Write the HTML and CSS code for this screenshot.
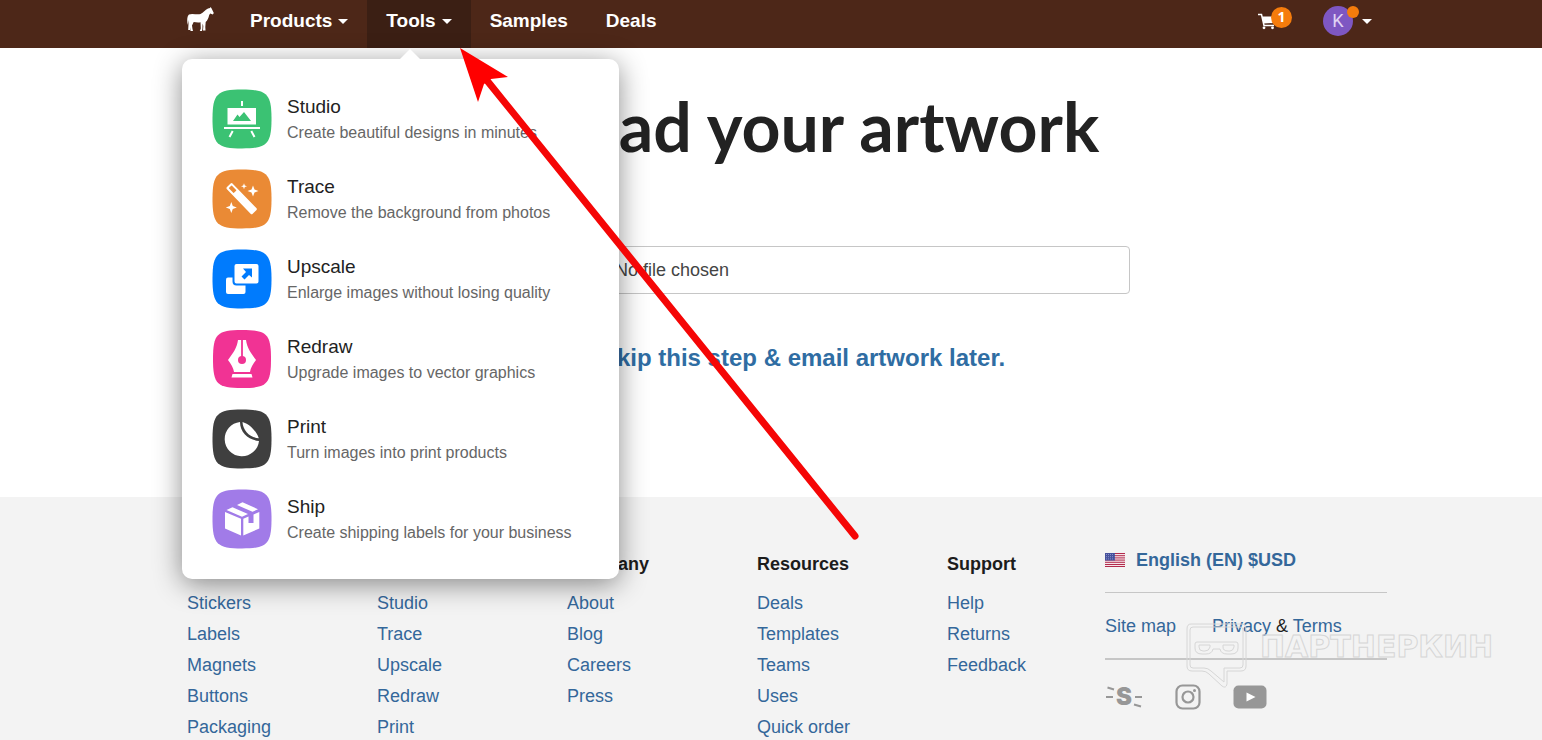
FILE: index.html
```
<!DOCTYPE html>
<html lang="en">
<head>
    <meta charset="UTF-8">
    <meta name="viewport" content="width=device-width, initial-scale=1.0">
    <title>Upload your artwork</title>
    <link rel="stylesheet" href="styles.css">
</head>
<body>
    <header class="topbar">
        <nav class="container nav">
            <a href="#" class="logo" aria-label="Home">
                <svg width="28" height="26" viewBox="0 0 28 26" fill="#fff">
                    <path d="M.8 18C-.2 14 0 9 2 7.500 5 6 9.500 7.800 13.500 7 16.500 6 18 3 21 1.600L23 1 23.600 0 24.600 1.500 26.800 6 25.800 7.400 23.200 6.600 22.200 8C21.500 11 20.500 13.500 18.700 15L18.300 20 18.500 23.500H16L16.300 19 15.600 16.500 15.400 22 15 24H12.800L13.800 21.500 13.500 15.300C11 15.800 8.500 15.300 6.700 15L5 18.500 5.500 22 6 24H3.500L3 20 3 23H1.200L1.500 17 1.300 13Z"/>
                </svg>
            </a>
            <ul class="nav-list">
                <li><button type="button" class="nav-item">Products<span class="caret"></span></button></li>
                <li><button type="button" class="nav-item active" aria-expanded="true">Tools<span class="caret"></span></button></li>
                <li><a href="#" class="nav-item">Samples</a></li>
                <li><a href="#" class="nav-item">Deals</a></li>
            </ul>
            <div class="account">
                <a href="#" class="cart" aria-label="Cart">
                    <svg width="18" height="17" viewBox="0 0 18 17" fill="none" stroke="#fff">
                        <path d="M0 1.500H3.500L6 12.500H16" stroke-width="1.500"/>
                        <path d="M4 3.500H17L15.500 10 5.500 10.500Z" fill="#fff" stroke="none"/>
                        <circle cx="6" cy="14.800" r="1.400" fill="#fff" stroke="none"/>
                        <circle cx="14.500" cy="14.800" r="1.400" fill="#fff" stroke="none"/>
                    </svg>
                    <span class="badge">1</span>
                </a>
                <button type="button" class="user">
                    <span class="avatar">K<span class="dot"></span></span>
                    <span class="caret"></span>
                </button>
            </div>

            <div class="menu">
                <a href="#" class="menu-item">
                    <svg class="menu-icon" viewBox="0 0 60 60">
                        <path fill="#3bc273" d="M30 .5C55 .5 59.500 5 59.500 30S55 59.500 30 59.500.5 55 .5 30 5 .5 30 .5Z"/>
                        <path fill="#fff" d="M29 12h2v5h-2zM15.500 19h28.500v16.500H15.500zM12 38h36v2H12z"/>
                        <path fill="#3bc273" d="M21 32 25.500 25.500 27.500 28 32 23 39 32Z"/>
                        <path stroke="#fff" stroke-width="2" d="M20.700 42 17.500 48M39.300 42 42.500 48"/>
                    </svg>
                    <span class="menu-text"><span class="menu-title">Studio</span><span class="menu-desc">Create beautiful designs in minutes</span></span>
                </a>
                <a href="#" class="menu-item">
                    <svg class="menu-icon" viewBox="0 0 60 60">
                        <path fill="#ea8a35" d="M30 .5C55 .5 59.500 5 59.500 30S55 59.500 30 59.500.5 55 .5 30 5 .5 30 .5Z"/>
                        <g transform="rotate(46 30 30)">
                            <rect x="11" y="26" width="37" height="8" rx="1.500" fill="#fff"/>
                            <rect x="13" y="28" width="7" height="4" rx=".5" fill="#ea8a35"/>
                        </g>
                        <path fill="#fff" d="M41 16.500 42.500 20.500 46.500 22 42.500 23.500 41 27.500 39.500 23.500 35.500 22 39.500 20.500ZM19.300 33 20.800 37 24.800 38.500 20.800 40 19.300 44 17.800 40 13.800 38.500 17.800 37ZM32 14.300 32.800 16.500 35 17.300 32.800 18.100 32 20.300 31.200 18.100 29 17.300 31.200 16.500Z"/>
                    </svg>
                    <span class="menu-text"><span class="menu-title">Trace</span><span class="menu-desc">Remove the background from photos</span></span>
                </a>
                <a href="#" class="menu-item">
                    <svg class="menu-icon" viewBox="0 0 60 60">
                        <path fill="#007bfd" d="M30 .5C55 .5 59.500 5 59.500 30S55 59.500 30 59.500.5 55 .5 30 5 .5 30 .5Z"/>
                        <rect x="14" y="28.500" width="19.500" height="16.500" rx="2" fill="#fff"/>
                        <rect x="21.500" y="14" width="26" height="21.500" rx="3" fill="#fff" stroke="#007bfd" stroke-width="2"/>
                        <path fill="#007bfd" d="M31 19.500H40V28.500L37 26 32.500 30.500 29.500 27.500 34 23Z"/>
                    </svg>
                    <span class="menu-text"><span class="menu-title">Upscale</span><span class="menu-desc">Enlarge images without losing quality</span></span>
                </a>
                <a href="#" class="menu-item">
                    <svg class="menu-icon" viewBox="0 0 60 60">
                        <path fill="#f13394" d="M30 1C55 1 59 5 59 30S55 59 30 59 1 55 1 30 5 1 30 1Z"/>
                        <path fill="#fff" d="M26 11H34C35 19 39 24 44 31 41 35 38.500 39 38 43H22C21.500 39 19 35 16 31 21 24 25 19 26 11ZM20.500 45H39.500L40.500 48.500H19.500Z"/>
                        <circle cx="30" cy="31" r="4" fill="#f13394"/>
                        <path stroke="#f13394" stroke-width="1.800" d="M30 10V31"/>
                    </svg>
                    <span class="menu-text"><span class="menu-title">Redraw</span><span class="menu-desc">Upgrade images to vector graphics</span></span>
                </a>
                <a href="#" class="menu-item">
                    <svg class="menu-icon" viewBox="0 0 60 60">
                        <path fill="#3f3f3f" d="M30 .5C55 .5 59.500 5 59.500 30S55 59.500 30 59.500.5 55 .5 30 5 .5 30 .5Z"/>
                        <path fill="#fff" d="M28 13A17.200 17.200 0 1 0 47 32C37 31 28 24 28 13ZM30.500 13C37 15 44 21 46.800 29.300 38 28.500 31 22 30.500 13Z"/>
                    </svg>
                    <span class="menu-text"><span class="menu-title">Print</span><span class="menu-desc">Turn images into print products</span></span>
                </a>
                <a href="#" class="menu-item">
                    <svg class="menu-icon" viewBox="0 0 60 60">
                        <path fill="#a17be8" d="M30 .5C55 .5 59.500 5 59.500 30S55 59.500 30 59.500.5 55 .5 30 5 .5 30 .5Z"/>
                        <path fill="#fff" d="M13 23 29 29.700V46.500L13 39.500ZM31.300 29.700 36.500 27.500V34H41.500V25.500L47.300 23V39.500L31.300 46.500ZM14.500 21 20.500 18.300 36 25 30 27.800ZM25 16 30.500 13.300 46 20.200 40.500 22.800Z"/>
                    </svg>
                    <span class="menu-text"><span class="menu-title">Ship</span><span class="menu-desc">Create shipping labels for your business</span></span>
                </a>
            </div>
        </nav>
    </header>

    <main class="upload">
        <div class="container">
            <h1>Upload your artwork</h1>
            <input type="file" class="file-input" aria-label="Artwork file">
            <a href="#" class="skip">Or skip this step &amp; email artwork later.</a>
        </div>
    </main>

    <footer class="footer">
        <div class="container footer-grid">
            <div class="footer-col">
                <h2>Products</h2>
                <a href="#">Stickers</a>
                <a href="#">Labels</a>
                <a href="#">Magnets</a>
                <a href="#">Buttons</a>
                <a href="#">Packaging</a>
            </div>
            <div class="footer-col">
                <h2>Tools</h2>
                <a href="#">Studio</a>
                <a href="#">Trace</a>
                <a href="#">Upscale</a>
                <a href="#">Redraw</a>
                <a href="#">Print</a>
            </div>
            <div class="footer-col">
                <h2>Company</h2>
                <a href="#">About</a>
                <a href="#">Blog</a>
                <a href="#">Careers</a>
                <a href="#">Press</a>
            </div>
            <div class="footer-col">
                <h2>Resources</h2>
                <a href="#">Deals</a>
                <a href="#">Templates</a>
                <a href="#">Teams</a>
                <a href="#">Uses</a>
                <a href="#">Quick order</a>
            </div>
            <div class="footer-col">
                <h2>Support</h2>
                <a href="#">Help</a>
                <a href="#">Returns</a>
                <a href="#">Feedback</a>
            </div>
            <div class="footer-side">
                <a href="#" class="locale">
                    <svg width="20" height="14" viewBox="0 0 20 14">
                        <rect width="20" height="14" fill="#f4e4e8"/>
                        <path stroke="#b22a4c" d="M0 .5H20M0 2.700H20M0 4.900H20M0 7.100H20M0 9.300H20M0 11.500H20M0 13.500H20"/>
                        <rect width="10" height="7.500" fill="#46519c"/>
                        <path stroke="#a9b0dc" stroke-width=".7" stroke-dasharray="1 1" d="M1 1.500H9.500M1 3.700H9.500M1 5.900H9.500"/>
                    </svg>
                    English (EN) $USD
                </a>
                <div class="legal">
                    <a href="#">Site map</a>
                    <span><a href="#">Privacy</a> &amp; <a href="#">Terms</a></span>
                </div>
                <div class="social">
                    <a href="#" aria-label="Blog" class="stickers-logo">
                        <svg width="10" height="26" viewBox="0 0 10 26">
                            <path stroke="#979797" stroke-width="2" d="M2.500 3.500 9 5.500M1 13H8"/>
                        </svg>
                        <span>S</span>
                        <svg width="10" height="26" viewBox="0 0 10 26">
                            <path stroke="#979797" stroke-width="2" d="M2 13H9M1 20.500 8 22.500"/>
                        </svg>
                    </a>
                    <a href="#" aria-label="Instagram">
                        <svg width="26" height="26" viewBox="0 0 26 26" fill="none" stroke="#979797" stroke-width="2.200">
                            <rect x="1.500" y="1.500" width="23" height="23" rx="6"/>
                            <circle cx="13" cy="13" r="5.500"/>
                            <circle cx="19.500" cy="6.500" r="1.500" fill="#979797" stroke="none"/>
                        </svg>
                    </a>
                    <a href="#" aria-label="YouTube">
                        <svg width="34" height="26" viewBox="0 0 34 26">
                            <rect x=".5" y="1.500" width="33" height="23" rx="5" fill="#979797"/>
                            <path fill="#fff" d="M13.500 8.500V17.500L22.500 13Z"/>
                        </svg>
                    </a>
                </div>
            </div>
        </div>
    </footer>

    <div class="watermark">
        <svg width="62" height="66" viewBox="0 0 62 66" fill="none" stroke="#d6d6d6">
            <path d="M5 1H55Q60 1 60 6V43Q60 48 55 48H41V61Q40 66 36 63L23 51Q20 48 16 48H6Q1 48 1 43V6Q1 1 5 1Z"/>
            <path d="M7 4H54Q57 4 57 7V42Q57 45 54 45H38V59L25 48Q22 45 18 45H7Q4 45 4 42V7Q4 4 7 4Z"/>
            <path d="M11 19H50Q52 19 52 21V25Q52 31 45 31H41Q35 31 34 26H27Q26 31 20 31H16Q9 31 9 25V21Q9 19 11 19Z"/>
            <path d="M13 22H24V24Q23 28 19 28H17Q13 28 13 24ZM37 22H48V24Q47 28 44 28H42Q37 28 37 24Z"/>
        </svg>
        <span class="watermark-text">ПАРТНЕРКИН</span>
    </div>

    <svg class="pointer" width="410" height="500" viewBox="0 0 410 500">
        <path stroke="#f50606" stroke-width="7" stroke-linecap="round" d="M25 30 395 488"/>
        <path fill="#f00" d="M0 0 48 29 31 31 24 36 18 54Z"/>
    </svg>
</body>
</html>
```
FILE: styles.css
```
:root {
    --brown: #4d2718;
    --brown-dark: #3b1f14;
    --orange: #f57c0c;
    --link: #34679a;
    --text: #222222;
    --line: #c6c6c6;
}

* {
    margin: 0;
    padding: 0;
    box-sizing: border-box;
}

body {
    position: relative;
    min-height: 100vh;
    display: flex;
    flex-direction: column;
    font-family: "Liberation Sans", Arial, sans-serif;
    font-size: 18px;
    color: var(--text);
    background: #fff;
}

a {
    color: var(--link);
    text-decoration: none;
}

button {
    font: inherit;
    border: 0;
    background: none;
    cursor: pointer;
}

svg {
    display: block;
}

.topbar,
.upload,
.footer {
    padding-left: 32px;
}

.container {
    width: 100%;
    max-width: 1200px;
    margin: 0 auto;
}

/* Top bar */
.topbar {
    background: var(--brown);
}

.nav {
    position: relative;
    display: flex;
    height: 48px;
}

.logo {
    padding-top: 7px;
    margin-right: 16px;
}

.nav-list {
    display: flex;
    list-style: none;
}

.nav-item {
    display: flex;
    align-items: center;
    gap: 6px;
    height: 48px;
    padding: 0 19px 6px;
    font-size: 19px;
    font-weight: bold;
    color: #fff;
}

.nav-item.active {
    background: var(--brown-dark);
}

.caret {
    border: 5px solid transparent;
    border-top-color: #fff;
    border-bottom: 0;
}

.account {
    display: flex;
    align-items: center;
    gap: 47px;
    height: 42px;
    margin-left: auto;
    padding-right: 15px;
}

.cart {
    position: relative;
}

.badge {
    position: absolute;
    top: -6px;
    left: 13px;
    width: 21px;
    height: 21px;
    border-radius: 50%;
    background: var(--orange);
    color: #fff;
    font: bold 14px/20px "Open Sans", sans-serif;
    text-align: center;
}

.user {
    display: flex;
    align-items: center;
    gap: 9px;
}

.avatar {
    position: relative;
    width: 30px;
    height: 30px;
    border-radius: 50%;
    background: #7e57c2;
    color: #e0d2f3;
    font: 18px/30px Roboto, sans-serif;
    text-align: center;
}

.dot {
    position: absolute;
    top: 0;
    right: -6px;
    width: 12px;
    height: 12px;
    border-radius: 50%;
    background: var(--orange);
}

/* Tools menu */
.menu {
    position: absolute;
    z-index: 2;
    top: 59px;
    left: -5px;
    width: 437px;
    display: flex;
    flex-direction: column;
    gap: 20px;
    padding: 30px;
    border-radius: 10px;
    background: #fff;
    box-shadow: 0 5px 28px rgba(0, 0, 0, 0.45);
}

.menu::before {
    content: "";
    position: absolute;
    top: -10px;
    left: 218px;
    border: 10px solid transparent;
    border-top: 0;
    border-bottom-color: #fff;
}

.menu-item {
    display: flex;
    align-items: center;
    gap: 15px;
    color: var(--text);
}

.menu-icon {
    width: 60px;
    height: 60px;
}

.menu-text {
    display: flex;
    flex-direction: column;
    padding-top: 2px;
    line-height: 26px;
}

.menu-title {
    font-size: 19px;
}

.menu-desc {
    font-size: 16px;
    color: #666;
}

/* Upload */
.upload {
    height: 449px;
    text-align: center;
}

.upload .container {
    display: flex;
    flex-direction: column;
    align-items: center;
}

.upload h1 {
    margin-top: 38px;
    font: bold 68px/80px Lato, sans-serif;
}

.file-input {
    width: 686px;
    max-width: 100%;
    height: 48px;
    margin-top: 80px;
    padding: 0 16px;
    border: 1px solid var(--line);
    border-radius: 4px;
    font: inherit;
    line-height: 46px;
    color: #444;
}

.file-input::file-selector-button {
    width: 150px;
    height: 32px;
    margin-right: 4px;
    font: inherit;
}

.skip {
    margin-top: 49px;
    font-size: 24px;
    line-height: 30px;
    font-weight: bold;
    color: #2f6da3;
}

/* Footer */
.footer {
    flex: 1;
    padding-top: 57px;
    background: #f3f3f3;
}

.footer-grid {
    display: grid;
    grid-template-columns: 190fr 190fr 190fr 190fr 158fr 282fr;
}

.footer-col {
    display: flex;
    flex-direction: column;
    align-items: flex-start;
    gap: 10px;
    line-height: 21px;
}

.footer-col h2 {
    margin-bottom: 8px;
    font-size: 18px;
    color: #1c1c1c;
}

.locale {
    display: flex;
    align-items: center;
    gap: 11px;
    height: 39px;
    padding-bottom: 26px;
    border-bottom: 1px solid var(--line);
    font-weight: bold;
}

.legal {
    display: flex;
    gap: 36px;
    height: 67px;
    border-bottom: 2px solid var(--line);
    line-height: 67px;
}

.social {
    display: flex;
    gap: 32px;
    padding-top: 24px;
}

.stickers-logo {
    display: flex;
    gap: 1px;
    color: #979797;
    font: 900 24px/26px Inter, sans-serif;
}

/* Overlays */
.watermark {
    position: absolute;
    z-index: 1;
    top: 623px;
    left: 1186px;
    display: flex;
    gap: 12px;
    pointer-events: none;
}

.watermark-text {
    font: bold 30px/48px "DejaVu Sans", sans-serif;
    color: transparent;
    -webkit-text-stroke: 1px #d6d6d6;
}

.pointer {
    position: absolute;
    z-index: 3;
    top: 48px;
    left: 460px;
    pointer-events: none;
}
```
